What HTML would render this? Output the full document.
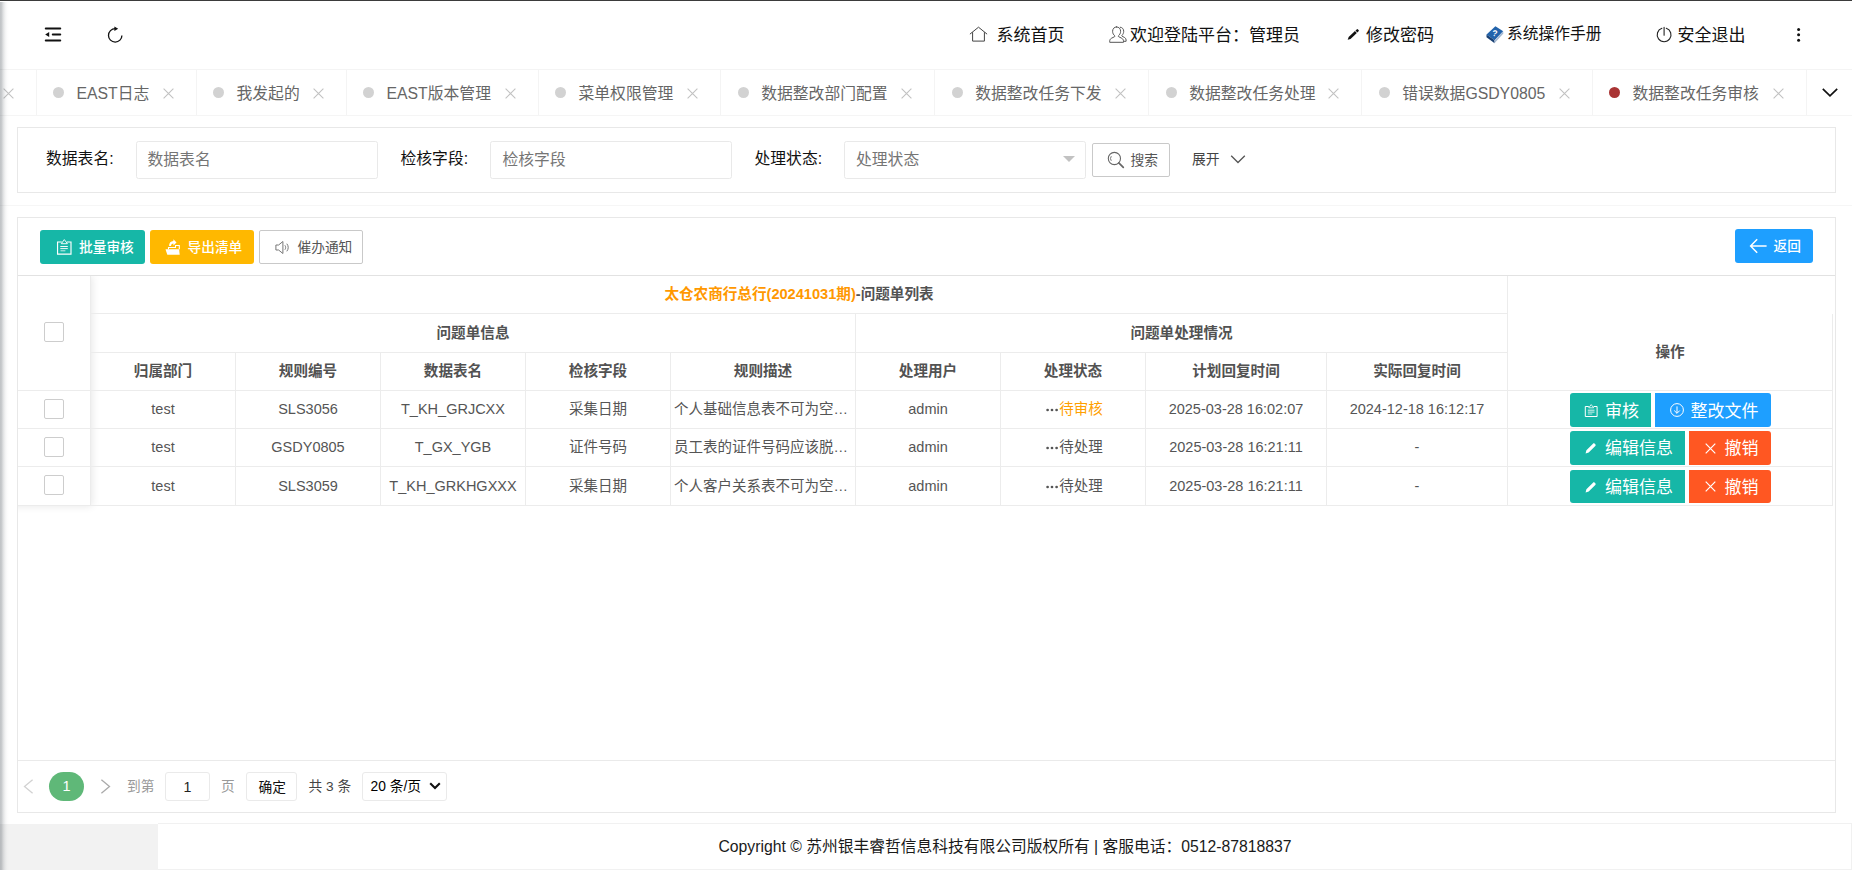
<!DOCTYPE html>
<html lang="zh-CN">
<head>
<meta charset="utf-8">
<title>数据整改任务审核</title>
<style>
*{box-sizing:border-box;margin:0;padding:0}
html,body{width:1852px;height:870px;overflow:hidden;background:#fff}
body{position:relative;font-family:"Liberation Sans","Noto Sans CJK SC",sans-serif;color:#333;font-size:14px}
.abs{position:absolute}
.t{position:absolute;white-space:nowrap;line-height:1}
svg{position:absolute;overflow:visible}
/* top */
#topline{left:0;top:0;width:1852px;height:1px;background:#3b3b3b}
#hdr{left:0;top:1px;width:1852px;height:69px;background:#fff;border-bottom:1px solid #f4f4f4}
.ht{font-size:17px;color:#111;top:27px;height:18px;line-height:18px}
/* tabs */
#tabs{left:0;top:69px;width:1852px;height:47px;border-top:1px solid #f4f4f4;border-bottom:1px solid #f5f5f5;background:#fff}
.tab{position:absolute;top:0;height:45px;border-right:1px solid #f4f4f4}
.tab .dot{position:absolute;left:calc(16px + var(--o,0px));top:17px;width:11px;height:11px;border-radius:50%;background:#d2d2d2}
.tab .tx{position:absolute;left:calc(39.500px + var(--o,0px));top:12.500px;height:22px;line-height:22px;font-size:15.8px;color:#666;white-space:nowrap}
.tab svg{right:22.500px;top:17.500px}
/* panels */
.panel{position:absolute;left:17px;width:1819px;border:1px solid #e8e8e8;background:#fff}
.lbl{font-size:15.8px;color:#111;top:149.500px;height:18px;line-height:18px}
.inp{position:absolute;top:141px;height:38px;width:242px;border:1px solid #e9e9e9;border-radius:2.500px;background:#fff;font-size:15.8px;color:#757575;line-height:36px;padding-left:9.500px;white-space:nowrap}
.btn{position:absolute;height:34px;border-radius:2px;color:#fff;font-size:13.8px;line-height:34px;white-space:nowrap}
/* table */
.hl{position:absolute;height:1px;background:#ececec}
.vl{position:absolute;width:1px;background:#ececec}
.th{position:absolute;font-weight:bold;font-size:14.6px;color:#525252;text-align:center;height:20px;line-height:20px;white-space:nowrap}
.td{position:absolute;font-size:14.5px;color:#555;text-align:center;height:20px;line-height:20px;white-space:nowrap;overflow:hidden}
.cb{position:absolute;left:44px;width:20px;height:20px;border:1px solid #cdcdcd;border-radius:2px;background:#fff}
.rb{position:absolute;height:34px;border-radius:2px;color:#fff;font-size:16.9px;line-height:34px;white-space:nowrap}
.pg{font-size:13.7px;top:778px;height:18px;line-height:18px}
</style>
</head>
<body>
<div id="topline" class="abs"></div>
<div id="hdr" class="abs"></div>
<!-- header icons + text -->
<svg style="left:44px;top:26px" width="18" height="17" viewBox="44 26 18 17"><g stroke="#111" stroke-width="2.1" stroke-linecap="round"><line x1="45.8" y1="28.5" x2="60.2" y2="28.5"/><line x1="52.8" y1="34.5" x2="60.2" y2="34.5"/><line x1="45.8" y1="40.5" x2="60.2" y2="40.5"/></g><path d="M45.2 34.5L49.2 32.1V36.9Z" fill="#111"/></svg>
<svg style="left:106px;top:25px" width="18" height="19" viewBox="106 25 18 19"><path d="M121.9 35.4A6.7 6.7 0 1 1 115.2 28.7" fill="none" stroke="#111" stroke-width="1.3"/><path d="M114.4 26.6L118.2 28.8L114.4 31.1Z" fill="#111"/></svg>
<svg style="left:969px;top:26px" width="19" height="17" viewBox="969 26 19 17"><path d="M970.2 33.9L978.5 27.2L986.8 33.9M972.6 32.6V41.1H984.4V32.6" fill="none" stroke="#444" stroke-width="1" stroke-linejoin="round" stroke-linecap="round"/></svg>
<div class="t ht" style="left:996.500px">系统首页</div>
<svg style="left:1108px;top:25px" width="20" height="19" viewBox="1108 25 20 19"><g fill="none" stroke="#555" stroke-width="1" stroke-linejoin="round" stroke-linecap="round"><path d="M1116.6 26.9c2.4 0 4 1.9 4 4.4c0 1.900-.9 3.500-2.100 4.400c-.3.200-.3.700 0 .9l3.300 1.700c1.100.6 1.700 1.700 1.700 2.900v1.100h-13.800v-1.100c0-1.200.6-2.300 1.700-2.900l3.300-1.700c.3-.2.300-.7 0-.9c-1.200-.9-2.100-2.500-2.100-4.400c0-2.500 1.600-4.400 4-4.400z"/><path d="M1120.300 27.200c2.100.2 3.400 1.900 3.400 4.100c0 1.700-.7 3.100-1.700 4c-.3.200-.3.600 0 .8l2.700 1.500c.9.500 1.400 1.400 1.400 2.400v1.300h-2.200"/></g></svg>
<div class="t ht" style="left:1130px">欢迎登陆平台：管理员</div>
<svg style="left:1347px;top:28px" width="13" height="13" viewBox="1347 28 13 13"><g transform="translate(1347.700 39.800) rotate(-43.500)"><path d="M0 0L2.600 -1.350H11.300V1.350H2.600Z" fill="#111"/><path d="M12 -1.350h1.700a.9.9 0 0 1 .9.9v.9a.9.9 0 0 1-.9.900h-1.700z" fill="#111"/></g></svg>
<div class="t ht" style="left:1366px">修改密码</div>
<svg style="left:1486px;top:25px" width="18" height="19" viewBox="1486 25 18 19"><path d="M1486.500 34.600L1495.400 26.200L1503.200 31.300L1494.600 40.300Z" fill="#2263ab"/><path d="M1486.500 34.600L1494.600 40.300L1494.600 43.200L1486.500 37.200Z" fill="#173f73"/><path d="M1494.600 40.300L1503.200 31.300L1503.200 33.800L1494.600 43.200Z" fill="#c4d2e3"/><path d="M1494.600 41.200L1503.200 32.100M1494.600 42.200L1503.200 33" stroke="#7f9bbd" stroke-width=".5"/><text x="1494.900" y="36.300" font-family="Liberation Sans,sans-serif" font-weight="bold" font-size="8.500" fill="#fff" text-anchor="middle" transform="rotate(10 1494.900 33.500)">?</text></svg>
<div class="t" style="left:1507px;top:25px;height:18px;line-height:18px;font-size:15.750px;color:#111">系统操作手册</div>
<svg style="left:1655px;top:26px" width="18" height="18" viewBox="1655 26 18 18"><path d="M1661.900 28.300A6.900 6.900 0 1 0 1666.300 28.300" fill="none" stroke="#222" stroke-width="1.100" stroke-linecap="round"/><line x1="1664.100" y1="27.400" x2="1664.100" y2="35.200" stroke="#222" stroke-width="1.100" stroke-linecap="round"/></svg>
<div class="t ht" style="left:1677.500px">安全退出</div>
<svg style="left:1796px;top:27px" width="5" height="16" viewBox="1796 27 5 16"><g fill="#111"><circle cx="1798.600" cy="29.500" r="1.500"/><circle cx="1798.600" cy="34.800" r="1.500"/><circle cx="1798.600" cy="40.200" r="1.500"/></g></svg>

<div id="tabs" class="abs">
<div class="tab" style="left:-140px;width:177px"><span class="dot"></span><span class="tx"></span><svg width="11" height="11" viewBox="0 0 11 11"><path d="M.6.6L10.400 10.400M10.400.6L.6 10.400" stroke="#c2c2c2" stroke-width="1.1" fill="none"/></svg></div>
<div class="tab" style="left:37px;width:160px"><span class="dot"></span><span class="tx">EAST日志</span><svg width="11" height="11" viewBox="0 0 11 11"><path d="M.6.6L10.400 10.400M10.400.6L.6 10.400" stroke="#c2c2c2" stroke-width="1.1" fill="none"/></svg></div>
<div class="tab" style="left:197px;width:150px"><span class="dot"></span><span class="tx">我发起的</span><svg width="11" height="11" viewBox="0 0 11 11"><path d="M.6.6L10.400 10.400M10.400.6L.6 10.400" stroke="#c2c2c2" stroke-width="1.1" fill="none"/></svg></div>
<div class="tab" style="left:347px;width:192px"><span class="dot"></span><span class="tx">EAST版本管理</span><svg width="11" height="11" viewBox="0 0 11 11"><path d="M.6.6L10.400 10.400M10.400.6L.6 10.400" stroke="#c2c2c2" stroke-width="1.1" fill="none"/></svg></div>
<div class="tab" style="left:539px;width:182px"><span class="dot"></span><span class="tx">菜单权限管理</span><svg width="11" height="11" viewBox="0 0 11 11"><path d="M.6.6L10.400 10.400M10.400.6L.6 10.400" stroke="#c2c2c2" stroke-width="1.1" fill="none"/></svg></div>
<div class="tab" style="--o:.7px;left:721px;width:214px"><span class="dot"></span><span class="tx">数据整改部门配置</span><svg width="11" height="11" viewBox="0 0 11 11"><path d="M.6.6L10.400 10.400M10.400.6L.6 10.400" stroke="#c2c2c2" stroke-width="1.1" fill="none"/></svg></div>
<div class="tab" style="--o:.7px;left:935px;width:214px"><span class="dot"></span><span class="tx">数据整改任务下发</span><svg width="11" height="11" viewBox="0 0 11 11"><path d="M.6.6L10.400 10.400M10.400.6L.6 10.400" stroke="#c2c2c2" stroke-width="1.1" fill="none"/></svg></div>
<div class="tab" style="--o:.7px;left:1149px;width:213px"><span class="dot"></span><span class="tx">数据整改任务处理</span><svg width="11" height="11" viewBox="0 0 11 11"><path d="M.6.6L10.400 10.400M10.400.6L.6 10.400" stroke="#c2c2c2" stroke-width="1.1" fill="none"/></svg></div>
<div class="tab" style="--o:.7px;left:1362px;width:231px"><span class="dot"></span><span class="tx">错误数据GSDY0805</span><svg width="11" height="11" viewBox="0 0 11 11"><path d="M.6.6L10.400 10.400M10.400.6L.6 10.400" stroke="#c2c2c2" stroke-width="1.1" fill="none"/></svg></div>
<div class="tab" style="left:1593px;width:214px"><span class="dot" style="background:#a93434"></span><span class="tx">数据整改任务审核</span><svg width="11" height="11" viewBox="0 0 11 11"><path d="M.6.6L10.400 10.400M10.400.6L.6 10.400" stroke="#c2c2c2" stroke-width="1.1" fill="none"/></svg></div>
<svg style="left:1821.500px;top:18px" width="16" height="9" viewBox="0 0 16 9"><path d="M.8.8L8 7.800L15.200.8" stroke="#111" stroke-width="1.700" fill="none"/></svg>
</div>
<div class="panel" style="top:127px;height:66px"></div>
<div class="abs" style="left:0;top:205px;width:1852px;height:1px;background:#f6f6f6"></div>
<div class="t lbl" style="left:46px">数据表名:</div>
<div class="inp" style="left:136px;width:242px;padding-left:10.500px">数据表名</div>
<div class="t lbl" style="left:400.500px">检核字段:</div>
<div class="inp" style="left:490px;width:242px;padding-left:11.500px">检核字段</div>
<div class="t lbl" style="left:754.500px">处理状态:</div>
<div class="inp" style="left:844px;width:242px;padding-left:11px">处理状态</div>
<svg style="left:1063px;top:156px" width="12" height="6" viewBox="0 0 12 6"><path d="M0 0H12L6 6Z" fill="#c2c2c2"/></svg>
<div class="abs" style="left:1092px;top:143px;width:78px;height:34px;border:1px solid #c9c9c9;border-radius:2px;background:#fff"></div>
<svg style="left:1107px;top:151px" width="18" height="18" viewBox="1107 151 18 18"><circle cx="1114.400" cy="158.500" r="6.100" fill="none" stroke="#666" stroke-width="1.100"/><path d="M1118.800 162.900L1123.300 167.300" stroke="#666" stroke-width="1.700" stroke-linecap="round"/><path d="M1111.300 156.200A3.800 3.800 0 0 0 1111.300 160.800" fill="none" stroke="#666" stroke-width=".9"/></svg>
<div class="t" style="left:1130.500px;top:152px;height:18px;line-height:18px;font-size:13.800px;color:#555">搜索</div>
<div class="t" style="left:1192px;top:150.800px;height:18px;line-height:18px;font-size:13.800px;color:#444">展开</div>
<svg style="left:1230px;top:155px" width="16" height="9" viewBox="0 0 16 9"><path d="M1.200.8L8 7.500L14.800.8" stroke="#555" stroke-width="1.300" fill="none"/></svg>

<div class="panel" style="top:217px;height:596px"></div>
<div class="btn" style="left:40px;top:230px;width:105px;background:#16b7a7;border-radius:3px"></div>
<svg style="left:56px;top:238px" width="17" height="18" viewBox="56 238 17 18"><g fill="none" stroke="#fff"><path d="M61.800 242H57.550V254.100H71V242H66.800" stroke-width="1.150"/><path d="M61.300 243.700L64.300 239.600L67.400 243.700Z" stroke-width=".9" stroke-linejoin="round"/><path d="M60.300 246.500H67.800M60.300 248.600H67.800" stroke-width=".95"/><path d="M60.500 250.800H65.400" stroke-width=".95" opacity=".8"/></g></svg>
<div class="t" style="left:79px;top:239px;height:18px;line-height:18px;font-size:13.700px;color:#fff;font-weight:500">批量审核</div>
<div class="btn" style="left:150px;top:230px;width:104px;background:#ffb800;border-radius:3px"></div>
<svg style="left:165px;top:239px" width="16" height="17" viewBox="0 0 16 17"><path d="M.5 10.200H14.100L14.700 15.800H2.300Z" fill="#fff"/><path d="M3.500 10.200V8.500H10.500V6.500H14.300V10.200" fill="none" stroke="#fff" stroke-width="1.100"/><path d="M4.100 7C4 4 5.800 2.200 8.400 2.100V.3L11.500 3.400L8.400 6.400V4.600C7.100 4.600 6.300 5.400 6 7Z" fill="#fff"/></svg>
<div class="t" style="left:187.500px;top:239px;height:18px;line-height:18px;font-size:13.700px;color:#fff;font-weight:500">导出清单</div>
<div class="abs" style="left:259px;top:230px;width:104px;height:34px;border:1px solid #c9c9c9;border-radius:2px;background:#fff"></div>
<svg style="left:275px;top:240px" width="15" height="15" viewBox="0 0 15 15"><g fill="none" stroke="#777" stroke-width="1"><path d="M.9 5H3.600L7.900 1.500V13.500L3.600 10H.9Z" stroke-linejoin="round"/><path d="M9.900 5.300C10.900 6.600 10.900 8.400 9.900 9.700"/><path d="M11.800 3.700C13.700 6 13.700 9 11.800 11.300"/></g></svg>
<div class="t" style="left:297.500px;top:239px;height:18px;line-height:18px;font-size:13.700px;color:#555">催办通知</div>
<div class="btn" style="left:1735px;top:229px;width:78px;background:#1e9fff;border-radius:3px"></div>
<svg style="left:1749px;top:238px" width="19" height="16" viewBox="0 0 19 16"><path d="M8.200 1.200L1.600 8L8.200 14.800M1.800 8H17.600" fill="none" stroke="#fff" stroke-width="1.500"/></svg>
<div class="t" style="left:1773.500px;top:238px;height:18px;line-height:18px;font-size:13.700px;color:#fff;font-weight:500">返回</div>
<div class="hl" style="left:18px;top:275px;width:1817px;background:#e2e2e2"></div>
<div class="abs" style="left:18px;top:276px;width:1817px;height:484px;overflow:hidden"><div class="abs" style="left:-10px;top:0;width:83px;height:230px;background:#fff;box-shadow:1px 0 8px rgba(0,0,0,.1)"></div></div>
<div class="hl" style="left:91px;top:313px;width:1416px"></div>
<div class="hl" style="left:91px;top:352px;width:1416px"></div>
<div class="hl" style="left:18px;top:390px;width:1815px"></div>
<div class="hl" style="left:18px;top:428px;width:1815px"></div>
<div class="hl" style="left:18px;top:466px;width:1815px"></div>
<div class="hl" style="left:18px;top:505px;width:1815px"></div>
<div class="vl" style="left:90px;top:276px;height:229px"></div>
<div class="vl" style="left:235px;top:353px;height:152px"></div>
<div class="vl" style="left:380px;top:353px;height:152px"></div>
<div class="vl" style="left:525px;top:353px;height:152px"></div>
<div class="vl" style="left:670px;top:353px;height:152px"></div>
<div class="vl" style="left:855px;top:314px;height:191px"></div>
<div class="vl" style="left:1000px;top:353px;height:152px"></div>
<div class="vl" style="left:1145px;top:353px;height:152px"></div>
<div class="vl" style="left:1326px;top:353px;height:152px"></div>
<div class="vl" style="left:1507px;top:276px;height:229px"></div>
<div class="vl" style="left:1832px;top:314px;height:191px"></div>
<div class="th" style="left:91px;width:1416px;top:284px"><span style="color:#ff9800">太仓农商行总行(20241031期)</span>-问题单列表</div>
<div class="th" style="left:91px;width:764px;top:323px">问题单信息</div>
<div class="th" style="left:856px;width:651px;top:323px">问题单处理情况</div>
<div class="th" style="left:91px;width:144px;top:361px">归属部门</div>
<div class="th" style="left:236px;width:144px;top:361px">规则编号</div>
<div class="th" style="left:381px;width:144px;top:361px">数据表名</div>
<div class="th" style="left:526px;width:144px;top:361px">检核字段</div>
<div class="th" style="left:671px;width:184px;top:361px">规则描述</div>
<div class="th" style="left:856px;width:144px;top:361px">处理用户</div>
<div class="th" style="left:1001px;width:144px;top:361px">处理状态</div>
<div class="th" style="left:1146px;width:180px;top:361px">计划回复时间</div>
<div class="th" style="left:1327px;width:180px;top:361px">实际回复时间</div>
<div class="th" style="left:1508px;width:324px;top:341.500px">操作</div>
<div class="cb" style="top:322px"></div>
<div class="cb" style="top:399px"></div>
<div class="cb" style="top:437px"></div>
<div class="cb" style="top:475px"></div>
<div class="td" style="left:91px;width:144px;top:398.5px">test</div>
<div class="td" style="left:236px;width:144px;top:398.5px">SLS3056</div>
<div class="td" style="left:381px;width:144px;top:398.5px">T_KH_GRJCXX</div>
<div class="td" style="left:526px;width:144px;top:399px">采集日期</div>
<div class="td" style="left:674px;width:178px;top:399px;text-align:left;text-overflow:ellipsis">个人基础信息表不可为空…</div>
<div class="td" style="left:856px;width:144px;top:398.5px">admin</div>
<div class="td" style="left:1001px;width:144px;top:399px;padding-left:2.500px"><svg style="position:relative;display:inline-block;vertical-align:middle;margin-right:.8px;top:0" width="12.500" height="4" viewBox="0 0 12.500 4"><g fill="#555"><circle cx="1.600" cy="2" r="1.350"/><circle cx="6" cy="2" r="1.350"/><circle cx="10.600" cy="2" r="1.350"/></g></svg><span style="color:#ffa000">待审核</span></div>
<div class="td" style="left:1146px;width:180px;top:398.5px">2025-03-28 16:02:07</div>
<div class="td" style="left:1327px;width:180px;top:398.5px">2024-12-18 16:12:17</div>
<div class="td" style="left:91px;width:144px;top:436.5px">test</div>
<div class="td" style="left:236px;width:144px;top:436.5px">GSDY0805</div>
<div class="td" style="left:381px;width:144px;top:436.5px">T_GX_YGB</div>
<div class="td" style="left:526px;width:144px;top:437px">证件号码</div>
<div class="td" style="left:674px;width:178px;top:437px;text-align:left;text-overflow:ellipsis">员工表的证件号码应该脱…</div>
<div class="td" style="left:856px;width:144px;top:436.5px">admin</div>
<div class="td" style="left:1001px;width:144px;top:437px;padding-left:2.500px"><svg style="position:relative;display:inline-block;vertical-align:middle;margin-right:.8px;top:0" width="12.500" height="4" viewBox="0 0 12.500 4"><g fill="#555"><circle cx="1.600" cy="2" r="1.350"/><circle cx="6" cy="2" r="1.350"/><circle cx="10.600" cy="2" r="1.350"/></g></svg><span style="color:#555">待处理</span></div>
<div class="td" style="left:1146px;width:180px;top:436.5px">2025-03-28 16:21:11</div>
<div class="td" style="left:1327px;width:180px;top:436.5px">-</div>
<div class="td" style="left:91px;width:144px;top:475.500px">test</div>
<div class="td" style="left:236px;width:144px;top:475.500px">SLS3059</div>
<div class="td" style="left:381px;width:144px;top:475.500px">T_KH_GRKHGXXX</div>
<div class="td" style="left:526px;width:144px;top:476px">采集日期</div>
<div class="td" style="left:674px;width:178px;top:476px;text-align:left;text-overflow:ellipsis">个人客户关系表不可为空…</div>
<div class="td" style="left:856px;width:144px;top:475.500px">admin</div>
<div class="td" style="left:1001px;width:144px;top:476px;padding-left:2.500px"><svg style="position:relative;display:inline-block;vertical-align:middle;margin-right:.8px;top:0" width="12.500" height="4" viewBox="0 0 12.500 4"><g fill="#555"><circle cx="1.600" cy="2" r="1.350"/><circle cx="6" cy="2" r="1.350"/><circle cx="10.600" cy="2" r="1.350"/></g></svg><span style="color:#555">待处理</span></div>
<div class="td" style="left:1146px;width:180px;top:475.500px">2025-03-28 16:21:11</div>
<div class="td" style="left:1327px;width:180px;top:475.500px">-</div>
<div class="rb" style="left:1570px;top:393px;width:81px;height:34px;background:#16b7a7;border-radius:3px 0 0 3px"></div>
<svg style="left:1584px;top:403px" width="15" height="15" viewBox="0 0 15 15"><g fill="none" stroke="#fff"><path d="M4.800 3.500H1.300V13.500H13.100V3.500H9.600" stroke-width="1"/><path d="M4.700 4.800L7.200 1.600L9.700 4.800Z" stroke-width=".8" stroke-linejoin="round"/><path d="M3.800 7.200H10.500M3.800 9.100H10.500" stroke-width=".85"/><path d="M3.900 11H8.300" stroke-width=".85" opacity=".8"/></g></svg>
<div class="t" style="left:1605px;top:400.500px;height:22px;line-height:22px;font-size:17px;color:#fff">审核</div>
<div class="rb" style="left:1655px;top:393px;width:116px;height:34px;background:#1e9fff;border-radius:0 3px 3px 0"></div>
<svg style="left:1670px;top:403.200px" width="14" height="14" viewBox="0 0 14 14"><g fill="none" stroke="#fff" stroke-width="1"><circle cx="7" cy="7" r="6.400"/><path d="M7 3.400V10.200M4.200 7.500L7 10.300L9.800 7.500"/></g></svg>
<div class="t" style="left:1690.500px;top:400.500px;height:22px;line-height:22px;font-size:17px;color:#fff">整改文件</div>
<div class="rb" style="left:1570px;top:431px;width:115px;height:34px;background:#16b7a7;border-radius:3px 0 0 3px"></div>
<svg style="left:1585.3px;top:442.2px" width="12" height="12" viewBox="0 0 12 12"><path d="M.6 11.400l.8-3.100l6.600-6.600c.5-.5 1.200-.5 1.700 0l.6.600c.5.500.5 1.200 0 1.700l-6.600 6.600z" fill="#fff"/></svg>
<div class="t" style="left:1605px;top:438.200px;height:22px;line-height:22px;font-size:17px;color:#fff">编辑信息</div>
<div class="rb" style="left:1689px;top:431px;width:82px;height:34px;background:#ff5722;border-radius:0 3px 3px 0"></div>
<svg style="left:1705.3px;top:442.5px" width="11" height="11" viewBox="0 0 11 11"><path d="M.7.7L10.300 10.300M10.300.7L.7 10.300" stroke="#fff" stroke-width="1.200" fill="none"/></svg>
<div class="t" style="left:1724.500px;top:438.200px;height:22px;line-height:22px;font-size:17px;color:#fff">撤销</div>
<div class="rb" style="left:1570px;top:470px;width:115px;height:33px;background:#16b7a7;border-radius:3px 0 0 3px"></div>
<svg style="left:1585.3px;top:480.7px" width="12" height="12" viewBox="0 0 12 12"><path d="M.6 11.400l.8-3.100l6.600-6.600c.5-.5 1.200-.5 1.700 0l.6.600c.5.500.5 1.200 0 1.700l-6.600 6.600z" fill="#fff"/></svg>
<div class="t" style="left:1605px;top:476.700px;height:22px;line-height:22px;font-size:17px;color:#fff">编辑信息</div>
<div class="rb" style="left:1689px;top:470px;width:82px;height:33px;background:#ff5722;border-radius:0 3px 3px 0"></div>
<svg style="left:1705.3px;top:481.0px" width="11" height="11" viewBox="0 0 11 11"><path d="M.7.7L10.300 10.300M10.300.7L.7 10.300" stroke="#fff" stroke-width="1.200" fill="none"/></svg>
<div class="t" style="left:1724.500px;top:476.700px;height:22px;line-height:22px;font-size:17px;color:#fff">撤销</div>
<div class="hl" style="left:18px;top:760px;width:1817px;background:#eaeaea"></div>
<svg style="left:23px;top:779px" width="11" height="15" viewBox="0 0 11 15"><path d="M9.600.7L1.500 7.500L9.600 14.300" fill="none" stroke="#d2d2d2" stroke-width="1.300"/></svg>
<div class="abs" style="left:49px;top:772px;width:35px;height:29px;border-radius:14.500px;background:#5fb878"></div>
<div class="t" style="left:49px;width:35px;text-align:center;top:777px;height:18px;line-height:18px;font-size:14.500px;color:#fff">1</div>
<svg style="left:100px;top:779px" width="11" height="15" viewBox="0 0 11 15"><path d="M1.400.7L9.500 7.500L1.400 14.300" fill="none" stroke="#aaa" stroke-width="1.300"/></svg>
<div class="t pg" style="left:127px;color:#999">到第</div>
<div class="abs" style="left:165px;top:772px;width:45px;height:29px;border:1px solid #eaeaea;border-radius:3px;background:#fff"></div>
<div class="t pg" style="left:165px;width:45px;text-align:center;color:#222;font-size:14.200px">1</div>
<div class="t pg" style="left:221px;color:#999">页</div>
<div class="abs" style="left:246px;top:772px;width:51px;height:29px;border:1px solid #eaeaea;border-radius:3px;background:#fff"></div>
<div class="t pg" style="left:258.500px;top:778.500px;color:#111">确定</div>
<div class="t pg" style="left:308.500px;color:#444">共 3 条</div>
<div class="abs" style="left:362px;top:772px;width:85px;height:29px;border:1px solid #eaeaea;border-radius:3px;background:#fff"></div>
<div class="t pg" style="left:370.500px;color:#000;font-size:13.800px">20 条/页</div>
<svg style="left:429px;top:782px" width="12" height="8" viewBox="0 0 12 8"><path d="M1.200 1.300L6 6L10.800 1.300" fill="none" stroke="#111" stroke-width="2.100"/></svg>
<div class="abs" style="left:0;top:824px;width:158px;height:46px;background:#f2f2f2"></div>
<div class="abs" style="left:158px;top:823px;width:1694px;height:47px;border:1px solid #f1f1f1;border-left:0;background:#fff"></div>
<div class="t" style="left:158px;width:1694px;text-align:center;top:836.500px;height:20px;line-height:20px;font-size:15.750px;color:#1a1a1a">Copyright © 苏州银丰睿哲信息科技有限公司版权所有 | 客服电话：0512-87818837</div>
<div class="abs" id="lshadow" style="left:0;top:2px;width:10px;height:868px;background:linear-gradient(to right,rgba(35,45,55,.285) 0,rgba(35,45,55,.28) .5px,rgba(35,45,55,.25) 1.5px,rgba(35,45,55,.19) 2.5px,rgba(35,45,55,.13) 3.5px,rgba(35,45,55,.086) 4.5px,rgba(35,45,55,.05) 5.5px,rgba(35,45,55,.027) 6.5px,rgba(35,45,55,.013) 7.5px,rgba(35,45,55,.005) 8.5px,rgba(35,45,55,0) 9.5px)"></div>
</body>
</html>
